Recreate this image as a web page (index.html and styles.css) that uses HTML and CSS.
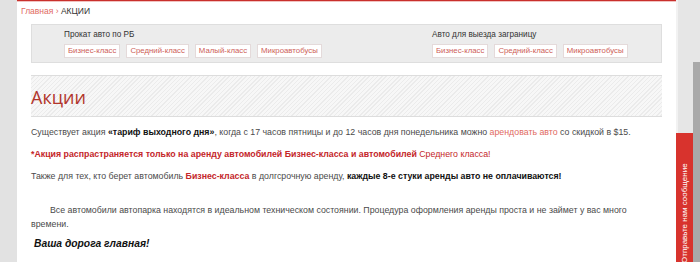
FILE: index.html
```html
<!DOCTYPE html>
<html lang="ru">
<head>
    <meta charset="UTF-8">
    <title>Акции</title>
    <link rel="stylesheet" href="styles.css">
</head>
<body>
<div class="page">
    <div class="side-left"></div>

    <div class="main">
        <div class="breadcrumbs">
            <a href="#">Главная</a> <span class="sep">›</span> <span>АКЦИИ</span>
        </div>

        <!-- Car classes menu -->
        <div class="classes">
            <div class="group group-rb">
                <div class="group-title">Прокат авто по РБ</div>
                <div class="buttons">
                    <a href="#" class="cls-btn">Бизнес-класс</a>
                    <a href="#" class="cls-btn">Средний-класс</a>
                    <a href="#" class="cls-btn">Малый-класс</a>
                    <a href="#" class="cls-btn">Микроавтобусы</a>
                </div>
            </div>
            <div class="group">
                <div class="group-title">Авто для выезда заграницу</div>
                <div class="buttons">
                    <a href="#" class="cls-btn">Бизнес-класс</a>
                    <a href="#" class="cls-btn">Средний-класс</a>
                    <a href="#" class="cls-btn">Микроавтобусы</a>
                </div>
            </div>
        </div>

        <div class="title-bar">
            <h1>Акции</h1>
        </div>

        <div class="content">
            <p>Существует акция <b class="black">«тариф выходного дня»</b>, когда с 17 часов пятницы и до 12 часов дня понедельника можно <a href="#">арендовать авто</a> со скидкой в $15.</p>
            <p class="red"><b>*Акция распрастраняется только на аренду автомобилей Бизнес-класса и автомобилей </b> Среднего класса!</p>
            <p>Также для тех, кто берет автомобиль <b class="red">Бизнес-класса</b> в долгсрочную аренду, <b class="black">каждые 8-е стуки аренды авто не оплачиваются!</b></p>
            <p class="indent">Все автомобили автопарка находятся в идеальном техническом состоянии. Процедура оформления аренды проста и не займет у вас много времени.</p>
            <p class="slogan">Ваша дорога главная!</p>
        </div>
    </div>

    <div class="side-right">
        <div class="scroll-thumb"></div>
    </div>

    <!-- Feedback tab -->
    <a href="#" class="feedback">Отправьте нам сообщение</a>
</div>
</body>
</html>
```

FILE: styles.css
```css
html, body {
    margin: 0;
    padding: 0;
    height: 100%;
    overflow: hidden;
}
body {
    font-family: "Liberation Sans", Arial, sans-serif;
    font-size: 8.8px;
    color: #4a4a4a;
    background: #fff;
}
a {
    color: #df6a5f;
    text-decoration: none;
}

.page {
    display: flex;
    height: 262px;
    position: relative;
}
.side-left {
    width: 17px;
    background: #e2e2e2;
}
.main {
    width: 659px;
    border-top: 1px solid #c9302c;
    box-shadow: inset 0 1px 0 #f1c2c0;
    box-sizing: border-box;
}
.side-right {
    flex: 1;
    display: flex;
    justify-content: flex-end;
    background: #e6e6e6;
    border-left: 2px solid #f2f2f2;
}
.scroll-thumb {
    width: 7px;
    margin-top: 62px;
    background: #a9a9a9;
}

.breadcrumbs {
    padding: 5px 0 0 4px;
    height: 18px;
    font-size: 8.5px;
    color: #333;
    box-sizing: border-box;
}
.breadcrumbs .sep {
    color: #df6a5f;
}

.classes {
    display: flex;
    margin: 5px 14px 0;
    background: #ececec;
    border: 1px solid #dedede;
    padding: 4px 0 0 32px;
    height: 39px;
    box-sizing: border-box;
}
.group-rb {
    width: 368px;
}
.group {
    white-space: nowrap;
}
.group-title {
    font-size: 8.2px;
    color: #333;
    height: 11px;
    line-height: 11px;
}
.buttons {
    display: flex;
    gap: 6px;
    margin-top: 4px;
}
.cls-btn {
    display: block;
    background: #fff;
    border: 1px solid #e4dada;
    font-size: 7.8px;
    color: #cd6058;
    padding: 0 3px;
    height: 12px;
    line-height: 12px;
}

.title-bar {
    margin: 12px 14px 0;
    height: 42px;
    border-top: 1px solid #ddd;
    border-bottom: 1px solid #ddd;
    background: repeating-linear-gradient(135deg, #f7f7f7 0, #f7f7f7 2px, #ebebeb 2px, #ebebeb 3px);
    box-sizing: border-box;
}
.title-bar h1 {
    margin: 0;
    padding-top: 9px;
    font-family: "Open Sans", "Liberation Sans", sans-serif;
    font-weight: normal;
    font-size: 18px;
    line-height: 24px;
    color: #b2352c;
}

.content {
    padding: 8px 14px 0;
}
.content p {
    margin: 0 0 8px;
    line-height: 14px;
}
.content .red {
    color: #c4262a;
}
.content .black {
    color: #111;
}
.content .indent {
    margin-top: 20px;
    margin-bottom: 6px;
    text-indent: 19px;
}
.content .slogan {
    margin-top: 6px;
    padding-left: 3px;
    font-size: 10.3px;
    font-weight: bold;
    font-style: italic;
    color: #111;
}

.feedback {
    position: absolute;
    left: 676px;
    top: 133px;
    width: 17px;
    height: 140px;
    background: #d8332d;
    border-radius: 8px 8px 0 0 / 5px 5px 0 0;
    color: #fff;
    font-size: 8px;
    writing-mode: vertical-rl;
    transform: rotate(180deg);
    display: flex;
    align-items: center;
    justify-content: flex-start;
    box-sizing: border-box;
    padding-top: 10px;
}
```
